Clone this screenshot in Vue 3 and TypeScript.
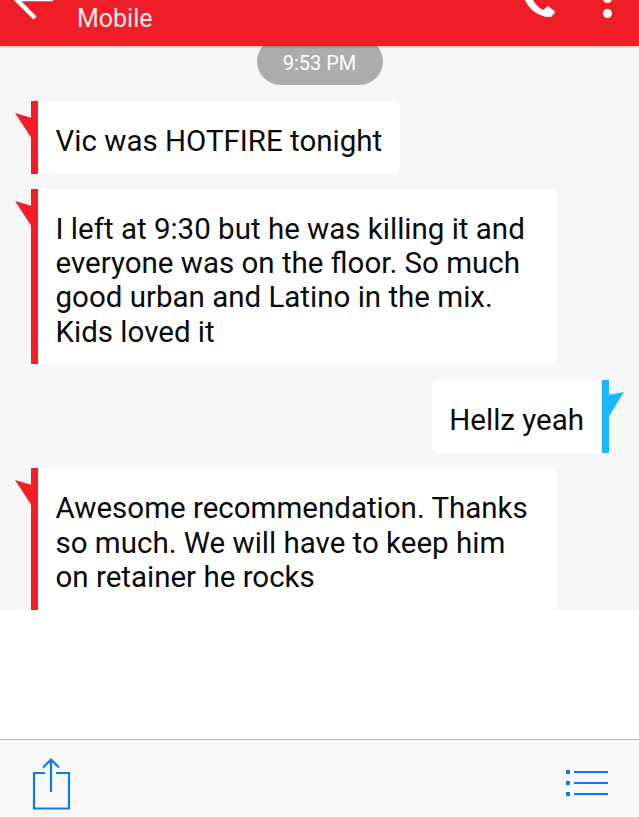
<script setup lang="ts">
interface Message {
  id: number
  side: 'in' | 'out'
  text: string
}

const messages: Message[] = [
  { id: 1, side: 'in', text: 'Vic was HOTFIRE tonight' },
  {
    id: 2,
    side: 'in',
    text: 'I left at 9:30 but he was killing it and everyone was on the floor. So much good urban and Latino in the mix. Kids loved it',
  },
  { id: 3, side: 'out', text: 'Hellz yeah' },
  { id: 4, side: 'in', text: 'Awesome recommendation. Thanks so much. We will have to keep him on retainer he rocks' },
]
</script>

<template>
  <div class="screen">
    <header class="topbar">
      <svg class="back" width="60" height="48" viewBox="0 0 60 48">
        <path d="M53 23H17M35 42L16 23 35 4" fill="none" stroke="#fff" stroke-width="4.500" />
      </svg>
      <div class="title">Mobile</div>
      <svg class="phone" width="40" height="40" viewBox="0 0 40 40">
        <path d="M4 16C5 26 18 38 31 37L35.500 32 28 26 23 30C19 28 15 24 13 20L16 14 9 6Z" fill="#fff" />
      </svg>
      <div class="dots"><i></i><i></i></div>
    </header>

    <main class="thread">
      <div class="stamp">9:53 PM</div>
      <div v-for="m in messages" :key="m.id" :class="['row', m.side]">
        <div class="bubble">
          <svg class="tail" width="17" height="28" viewBox="0 0 17 28">
            <polygon v-if="m.side === 'in'" points="0,1 17,6 17,27" fill="#f81c26" />
            <polygon v-else points="16,1 0,4 0,27" fill="#1fb6ff" />
          </svg>
          {{ m.text }}
        </div>
      </div>
    </main>

    <div class="blank"></div>

    <footer class="toolbar">
      <svg width="40" height="54" viewBox="0 0 40 54">
        <path d="M13 16H2v35.500h35V16H24" fill="none" stroke="#0f7ae5" stroke-width="2.200" />
        <path d="M19 35V2M11 10.500L19 2.500l8 8" fill="none" stroke="#0f7ae5" stroke-width="2.200" />
      </svg>
      <svg width="42" height="26" viewBox="0 0 42 26">
        <g fill="#0f7ae5">
          <rect x="0" y="0" width="4" height="4" />
          <rect x="0" y="11" width="4" height="4" />
          <rect x="0" y="22" width="4" height="4" />
          <rect x="8" y="1" width="34" height="2" />
          <rect x="8" y="12" width="34" height="2" />
          <rect x="8" y="23" width="34" height="2" />
        </g>
      </svg>
    </footer>
  </div>
</template>

<style>
html, body { margin: 0; background: #fff; }
</style>

<style scoped>
.screen { width: 639px; height: 817px; display: flex; flex-direction: column; overflow: hidden; font-family: Roboto, "Liberation Sans", sans-serif; background: #fff; }
.topbar { position: relative; z-index: 2; flex: none; height: 46px; display: flex; align-items: flex-end; background: #ee1d27; box-shadow: 0 1px 2px rgba(120, 0, 0, 0.35); color: #fff; }
.back { flex: none; margin-bottom: 22px; }
.title { flex: 1; margin: 0 0 13px 17px; font-size: 25px; line-height: 28px; color: #fbeaea; }
.phone { flex: none; margin: 0 43px 26px 0; }
.dots { flex: none; display: flex; flex-direction: column; gap: 6px; margin: 0 27px 28px 0; }
.dots i { display: block; width: 9px; height: 9px; border-radius: 50%; background: #fff; }
.thread { flex: none; height: 564px; background: #f7f7f7; display: flex; flex-direction: column; }
.stamp { flex: none; align-self: center; width: 126px; height: 47px; margin: -8px 0 16px; box-sizing: border-box; padding-top: 8px; border-radius: 24px; background: #adadad; color: #fff; font-size: 20px; line-height: 34px; text-align: center; }
.row { flex: none; display: flex; }
.row + .row { margin-top: 15px; }
.row.in { justify-content: flex-start; padding-left: 31px; }
.row.out { justify-content: flex-end; padding-right: 30px; margin-top: 16px; }
.bubble { position: relative; box-sizing: border-box; max-width: 526px; padding: 23px 18px 15.500px 17.500px; background: #fff; font-size: 29.500px; line-height: 34.300px; color: #0a0a0a; }
.in .bubble { border-left: 7px solid #f81c26; border-radius: 0 6px 6px 0; }
.out .bubble { border-right: 7px solid #1fb6ff; border-radius: 6px 0 0 6px; }
.tail { position: absolute; top: 11px; }
.in .tail { left: -23px; }
.out .tail { right: -23px; }
.blank { flex: 1; }
.toolbar { flex: none; height: 78px; box-sizing: border-box; border-top: 1px solid #b9b9b9; background: #f9f9f9; display: flex; justify-content: space-between; align-items: flex-start; padding: 17px 31px 0 32px; }
.toolbar svg:last-child { margin-top: 13px; }
</style>
